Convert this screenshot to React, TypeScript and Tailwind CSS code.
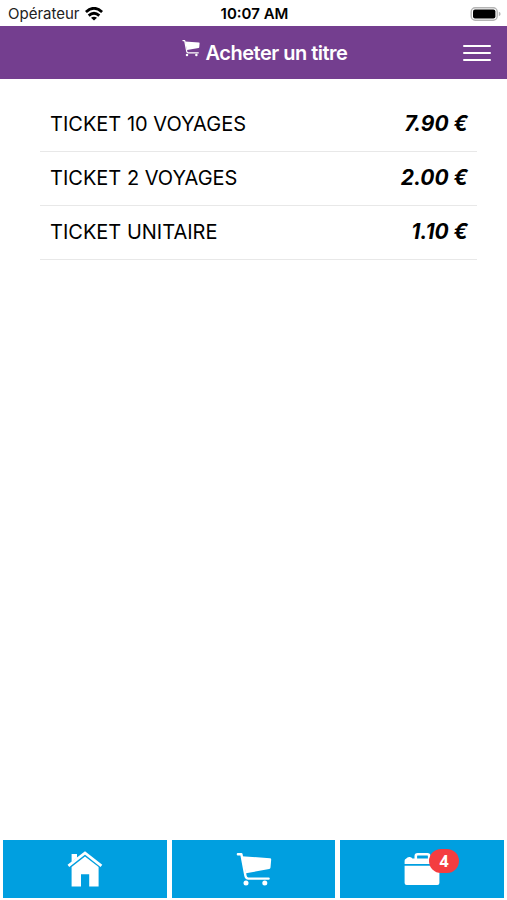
import { ReactNode } from "react";

interface Ticket {
    name: string;
    price: string;
}

const tickets: Ticket[] = [
    { name: "TICKET 10 VOYAGES", price: "7.90 €" },
    { name: "TICKET 2 VOYAGES", price: "2.00 €" },
    { name: "TICKET UNITAIRE", price: "1.10 €" },
];

function CartIcon({ className }: { className: string }) {
    return (
        <svg viewBox="0 0 36 34" className={className} fill="currentColor" aria-hidden="true">
            <path d="M1.9 2.2H5.4L9.4 23.6Q10 26.6 12.4 26.6H32.6" fill="none" stroke="currentColor" strokeWidth="2.4" strokeLinecap="round" strokeLinejoin="round" />
            <path d="M5.8 4.2L34 6.2Q35.3 6.3 35.2 7.6L34.5 15.6Q34.4 16.9 33.2 17.1L10 21.2Z" />
            <circle cx="10" cy="31" r="2.5" />
            <circle cx="28.8" cy="31" r="2.5" />
        </svg>
    );
}

function HomeIcon() {
    return (
        <svg viewBox="0 0 36 36" className="w-9 h-9" fill="currentColor" aria-hidden="true">
            <path d="M1.4 14.8L18 2L34.4 14.8" fill="none" stroke="currentColor" strokeWidth="2.8" />
            <path d="M4.6 3H10V6.8L4.6 11Z" />
            <path d="M18 5.4L31.6 16V35.4H22.2V23.2H14V35.4H4.6V16Z" />
        </svg>
    );
}

function WalletIcon() {
    return (
        <svg viewBox="0 0 36 34" className="w-9 h-[34px]" fill="currentColor" aria-hidden="true">
            <path d="M11.8 7V4Q11.8 2.2 13.6 2.2H23.4Q25.2 2.2 25.2 4V7" fill="none" stroke="currentColor" strokeWidth="2.6" />
            <path d="M.6 12V8.8Q.6 7.4 2 6.8Q3.6 4.6 5.8 5Q7.6 5.2 8.4 6.6H33.4Q35.4 6.6 35.4 8.6V12Z" />
            <path d="M.6 13.8H35.4V31Q35.4 33 33.4 33H2.6Q.6 33 .6 31Z" />
        </svg>
    );
}

function WifiIcon() {
    return (
        <svg viewBox="0 0 18 14" className="w-[18px] h-3.5" aria-hidden="true">
            <g fill="none" stroke="#000" strokeWidth="2.8">
                <path d="M.9 5Q9-2.4 17.1 5" />
                <path d="M3.7 8.6Q9 4 14.3 8.6" />
            </g>
            <path d="M9 13.6L6 10.7Q9 8.6 12 10.7Z" fill="#000" />
        </svg>
    );
}

function StatusBar() {
    return (
        <div className="h-[26px] pt-0.5 pl-2 pr-1.5 grid grid-cols-3 items-center text-[15px] text-[#222]">
            <div className="flex items-center gap-[5px]">
                <span>Opérateur</span>
                <WifiIcon />
            </div>
            <span className="text-center font-semibold text-black">10:07 AM</span>
            <svg viewBox="0 0 31 14" className="w-[31px] h-3.5 justify-self-end" aria-hidden="true">
                <rect x="1.2" y=".8" width="26" height="12.4" rx="4" fill="#fff" stroke="#b4b4b4" strokeWidth="1.4" />
                <rect x="3" y="2.4" width="22.4" height="9.2" rx="2" fill="#000" />
                <path d="M28.8 4.8Q30.6 5.4 30.6 7T28.8 9.2Z" fill="#b4b4b4" />
            </svg>
        </div>
    );
}

function TabButton({ label, children }: { label: string; children: ReactNode }) {
    return (
        <button type="button" aria-label={label} className="flex-1 flex items-center justify-center bg-[#009fe0] text-white cursor-pointer">
            {children}
        </button>
    );
}

export default function App() {
    return (
        <div className="min-h-screen flex flex-col bg-white text-black font-['Inter',sans-serif]">
            <StatusBar />

            <header className="h-[53px] px-4 grid grid-cols-[28px_1fr_28px] items-center bg-[#743e8f] text-white">
                <h1 className="col-start-2 flex justify-center gap-1.5 pl-[22px] text-xl font-semibold tracking-tight">
                    <CartIcon className="w-[18px] h-[18px]" />
                    Acheter un titre
                </h1>
                <button type="button" aria-label="Menu" className="flex flex-col gap-[5px] cursor-pointer">
                    <span className="w-full h-0.5 rounded-full bg-white" />
                    <span className="w-full h-0.5 rounded-full bg-white" />
                    <span className="w-full h-0.5 rounded-full bg-white" />
                </button>
            </header>

            <main className="flex-1 pl-10 pr-[30px] pt-[19px]">
                <ul>
                    {tickets.map((ticket) => (
                        <li key={ticket.name} className="h-[54px] pl-2.5 pr-[9px] pb-0.5 flex items-center justify-between border-b border-[#e8e8e8]">
                            <span className="text-xl">{ticket.name}</span>
                            <span className="text-[21px] font-bold italic">{ticket.price}</span>
                        </li>
                    ))}
                </ul>
            </main>

            <nav className="h-[60px] px-[3px] pb-0.5 flex gap-[5px]">
                <TabButton label="Accueil">
                    <HomeIcon />
                </TabButton>
                <TabButton label="Acheter">
                    <CartIcon className="w-9 h-[34px]" />
                </TabButton>
                <TabButton label="Mes titres">
                    <span className="relative">
                        <WalletIcon />
                        <span className="absolute -top-[3px] left-[25px] w-[30px] h-6 rounded-full bg-[#f43d40] text-base leading-6 font-bold text-center font-['Open_Sans',sans-serif]">
                            4
                        </span>
                    </span>
                </TabButton>
            </nav>
        </div>
    );
}
